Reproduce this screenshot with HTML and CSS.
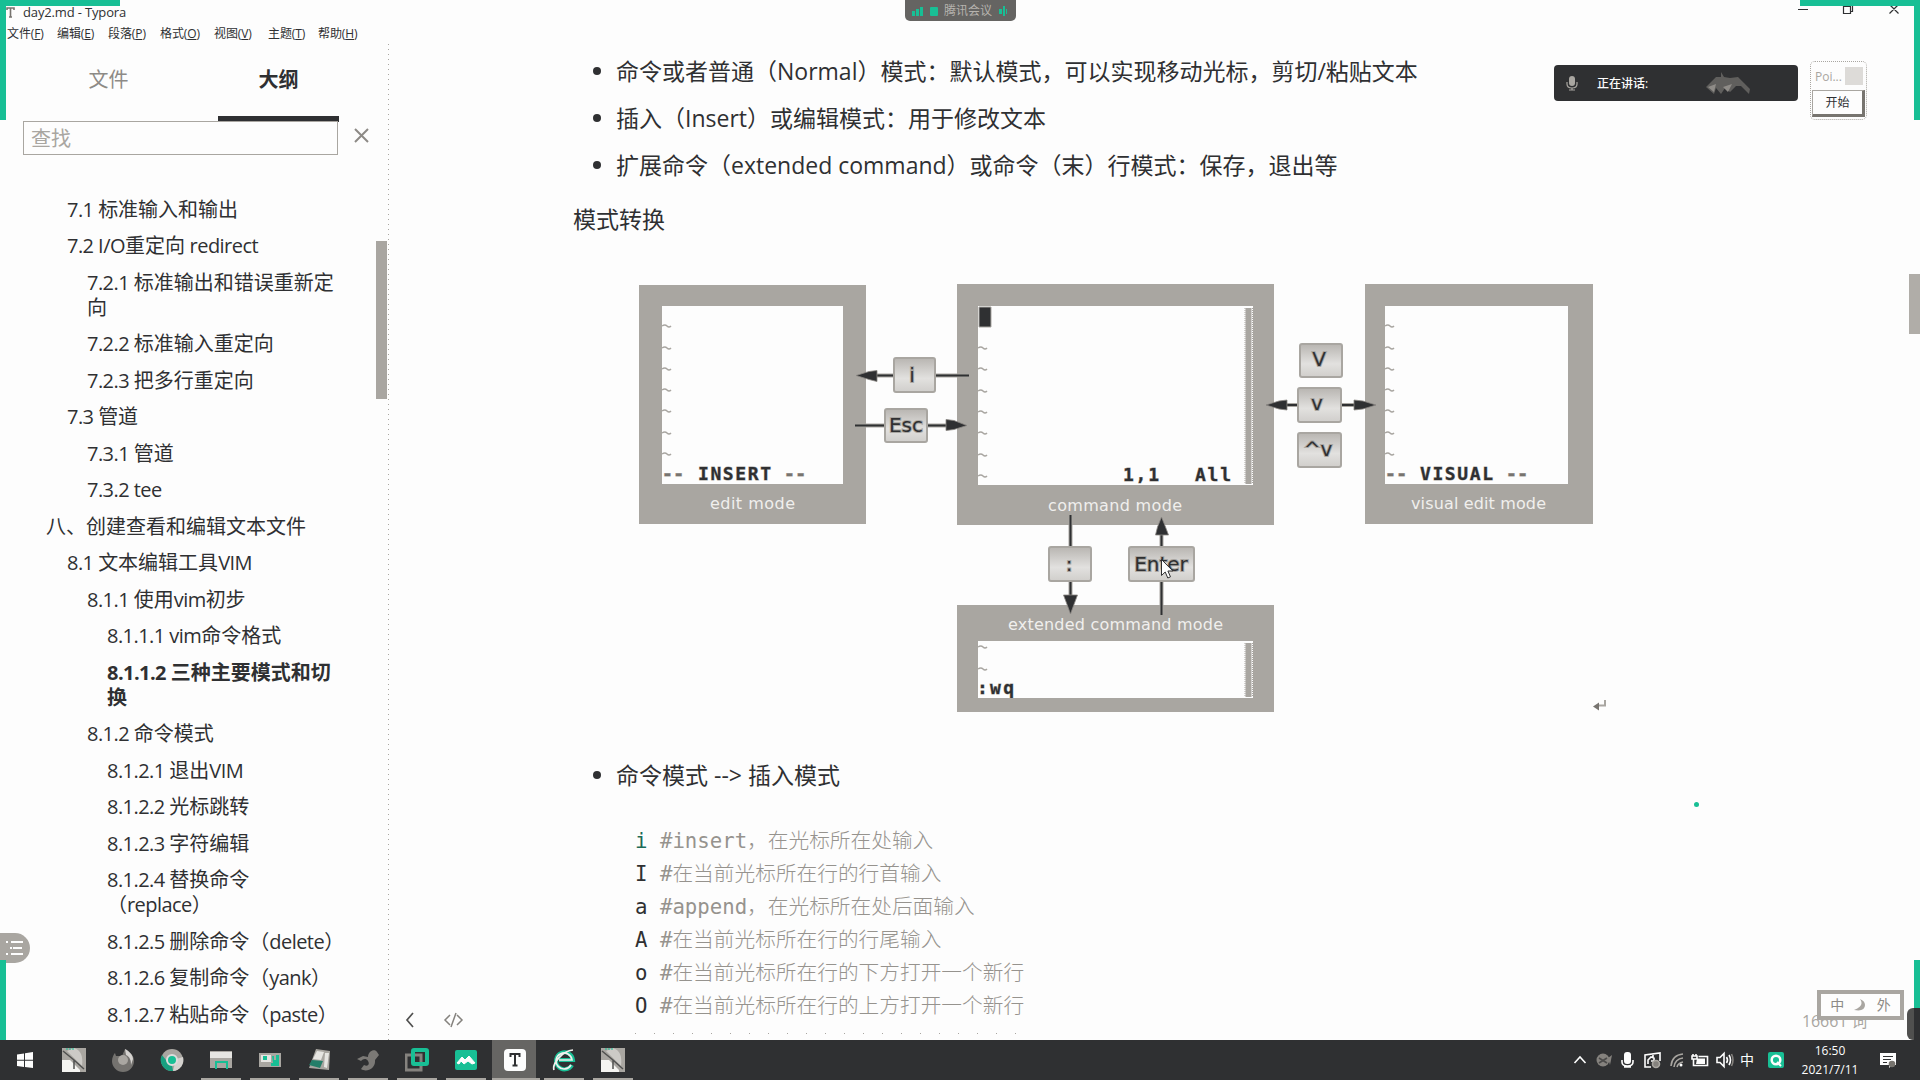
FILE: index.html
```html
<!DOCTYPE html>
<html lang="zh-CN">
<head>
<meta charset="utf-8">
<title>day2.md - Typora</title>
<link rel="stylesheet" href="styles.css">
</head>
<body>
<div class="window">
  <header class="titlebar">
    <svg class="app-mark" viewBox="0 0 9 11"><path d="M1 3V1h7v2M4.500 1v9M3 10h3" fill="none" stroke="#77746f" stroke-width="1.600"/></svg>
    <span class="title">day2.md - Typora</span>
    <svg class="win-controls" viewBox="0 0 104 14"><path d="M0 6.500h10M45.500 3.500h7v7h-7zM47.500 3V1.500h7v7H53M91.500 1.500l9 9m0-9l-9 9" fill="none" stroke="#2f3032" stroke-width="1.200"/></svg>
  </header>
  <nav class="menubar">
    <span>文件(<u>F</u>)</span><span>编辑(<u>E</u>)</span><span>段落(<u>P</u>)</span><span>格式(<u>O</u>)</span><span>视图(<u>V</u>)</span><span>主题(<u>T</u>)</span><span>帮助(<u>H</u>)</span>
  </nav>
  <div class="main">
    <aside class="sidebar">
      <div class="tabs"><span class="tab">文件</span><span class="tab active">大纲</span></div>
      <div class="search-row">
        <div class="search">查找</div>
        <svg class="close" viewBox="0 0 15 15"><path d="M1 1l13 13M14 1L1 14" stroke="#8d8a86" stroke-width="2"/></svg>
      </div>
      <ul class="outline">
        <li class="l2"><i>7.1 </i>标准输入和输出</li>
        <li class="l2"><i>7.2 I/O</i>重定向<i> redirect</i></li>
        <li class="l3"><i>7.2.1 </i>标准输出和错误重新定<br>向</li>
        <li class="l3"><i>7.2.2 </i>标准输入重定向</li>
        <li class="l3"><i>7.2.3 </i>把多行重定向</li>
        <li class="l2"><i>7.3 </i>管道</li>
        <li class="l3"><i>7.3.1 </i>管道</li>
        <li class="l3"><i>7.3.2 tee</i></li>
        <li class="l1">八、创建查看和编辑文本文件</li>
        <li class="l2"><i>8.1 </i>文本编辑工具<i>VIM</i></li>
        <li class="l3"><i>8.1.1 </i>使用<i>vim</i>初步</li>
        <li class="l4"><i>8.1.1.1 vim</i>命令格式</li>
        <li class="l4 current"><i>8.1.1.2 </i>三种主要模式和切<br>换</li>
        <li class="l3"><i>8.1.2 </i>命令模式</li>
        <li class="l4"><i>8.1.2.1 </i>退出<i>VIM</i></li>
        <li class="l4"><i>8.1.2.2 </i>光标跳转</li>
        <li class="l4"><i>8.1.2.3 </i>字符编辑</li>
        <li class="l4"><i>8.1.2.4 </i>替换命令<br>（<i>replace</i>）</li>
        <li class="l4"><i>8.1.2.5 </i>删除命令（<i>delete</i>）</li>
        <li class="l4"><i>8.1.2.6 </i>复制命令（<i>yank</i>）</li>
        <li class="l4"><i>8.1.2.7 </i>粘贴命令（<i>paste</i>）</li>
      </ul>
      <div class="side-scroll"></div>
    </aside>
    <article class="content">
      <ul class="bullets">
        <li>命令或者普通（Normal）模式：默认模式，可以实现移动光标，剪切/粘贴文本</li>
        <li>插入（Insert）或编辑模式：用于修改文本</li>
        <li>扩展命令（extended command）或命令（末）行模式：保存，退出等</li>
      </ul>
      <p class="para">模式转换</p>
      <svg class="diagram" viewBox="620 270 1000 450">
        <defs>
          <linearGradient id="key" x1="0" y1="0" x2="0" y2="1"><stop offset="0" stop-color="#b8b5b1"/><stop offset=".6" stop-color="#e2e1df"/><stop offset="1" stop-color="#d0cecb"/></linearGradient>
          <path id="tl" d="M0 0q3-2 5 0t4 0" fill="none" stroke="#a9a6a1" stroke-width="1.500"/>
        </defs>
        <g fill="#a9a6a1">
          <path d="M639 285h227v239H639zM957 284h317v241H957zM1365 284h228v240h-228zM957 605h317v107H957z"/>
        </g>
        <g fill="#fdfdfd">
          <path d="M662 306h181v178H662zM978 306h275v179H978zM1385 306h183v178h-183zM978 641h275v57H978z"/>
        </g>
        <path d="M1248.500 308v176M1248.500 643v54" stroke="#a9a6a1" stroke-width="6"/>
        <path d="M1252.500 308v176M1252.500 643v54M1245 308v176M1245 643v54" stroke="#a9a6a1" stroke-dasharray="1 1"/>
        <path d="M979 307h12v20h-12z" fill="#2f3032" stroke="#a9a6a1"/>
        <use href="#tl" x="662" y="326"/><use href="#tl" x="662" y="348"/><use href="#tl" x="662" y="369"/><use href="#tl" x="662" y="390"/><use href="#tl" x="662" y="411"/><use href="#tl" x="662" y="433"/><use href="#tl" x="662" y="454"/>
        <use href="#tl" x="978" y="348"/><use href="#tl" x="978" y="369"/><use href="#tl" x="978" y="391"/><use href="#tl" x="978" y="412"/><use href="#tl" x="978" y="433"/><use href="#tl" x="978" y="455"/><use href="#tl" x="978" y="476"/>
        <use href="#tl" x="1385" y="326"/><use href="#tl" x="1385" y="348"/><use href="#tl" x="1385" y="369"/><use href="#tl" x="1385" y="390"/><use href="#tl" x="1385" y="411"/><use href="#tl" x="1385" y="433"/><use href="#tl" x="1385" y="454"/>
        <use href="#tl" x="978" y="647"/><use href="#tl" x="978" y="669"/>
        <g class="term">
          <text x="662" y="480" textLength="22" class="dash">--</text><text x="698" y="480" textLength="73">INSERT</text><text x="784" y="480" textLength="22" class="dash">--</text>
          <text x="1123" y="481" textLength="36">1,1</text><text x="1195" y="481" textLength="36">All</text>
          <text x="1385" y="480" textLength="22" class="dash">--</text><text x="1420" y="480" textLength="73">VISUAL</text><text x="1506" y="480" textLength="22" class="dash">--</text>
          <text x="977" y="694" textLength="37">:wq</text>
        </g>
        <g class="label">
          <text x="710" y="509" textLength="85">edit mode</text>
          <text x="1048" y="511" textLength="134">command mode</text>
          <text x="1411" y="509" textLength="135">visual edit mode</text>
          <text x="1008" y="630" textLength="215">extended command mode</text>
        </g>
        <g stroke="#a9a6a1" stroke-width="4"><path d="M877 375.500h90M866 425.500h82M1285 405h72M1070.500 523v74M1161.500 533v76"/></g>
        <g stroke="#2f3032" stroke-width="2"><path d="M870 375.500h99M855 425.500h98M1280 405h84M1070.500 515v84M1161.500 530v85"/></g>
        <g fill="#2f3032" stroke="#8b8884" stroke-width=".8">
          <path d="M856 375.500l13-4 8-1v11l-8-2zM967 425.500l-13 4-8 1v-11l8 1zM1266 405l13-4 8-1v10l-8-1zM1376 405l-13 4-9 1v-10l9 1zM1070.500 614l-4-11-3-8h14l-3 8zM1161.500 517l4 10 3 8h-13l2-8z"/>
        </g>
        <g fill="url(#key)" stroke="#a9a6a1" stroke-width="2">
          <rect x="894" y="358" width="41" height="34" rx="2"/><rect x="885" y="409" width="42" height="33" rx="2"/>
          <rect x="1300" y="344" width="42" height="33" rx="2"/><rect x="1298" y="388" width="43" height="34" rx="2"/><rect x="1298" y="433" width="43" height="34" rx="2"/>
          <rect x="1049" y="547" width="42" height="34" rx="2"/><rect x="1129" y="547" width="65" height="34" rx="2"/>
        </g>
        <g class="keycap">
          <text x="912" y="382">i</text><text x="906" y="432">Esc</text><text x="1319" y="366">V</text><text x="1317" y="410">v</text><text x="1318" y="456">^v</text><text x="1069" y="571">:</text><text x="1161" y="571">Enter</text>
        </g>
        <path d="M1161.500 559.500v16l3.700-3.500 2.600 6 2.700-1.200-2.600-5.800h5z" fill="#fdfdfd" stroke="#2f3032"/>
        <path d="M1605 700v5.500h-7" fill="none" stroke="#a9a6a1" stroke-width="2"/><path d="M1593 706.500l6-4v8z" fill="#77746f"/>
      </svg>
      <ul class="bullets second"><li>命令模式 --&gt; 插入模式</li></ul>
      <pre class="code"><b class="g">i</b> <span>#insert，在光标所在处输入</span>
<b>I</b> <span>#在当前光标所在行的行首输入</span>
<b>a</b> <span>#append，在光标所在处后面输入</span>
<b>A</b> <span>#在当前光标所在行的行尾输入</span>
<b>o</b> <span>#在当前光标所在行的下方打开一个新行</span>
<b>O</b> <span>#在当前光标所在行的上方打开一个新行</span></pre>
      <div class="next-line"></div>
    </article>
  </div>
  <footer class="taskbar">
    <div class="apps">
      <div class="app"><svg viewBox="0 0 24 24"><path d="M4 6.500l7-1v6.200H4zM12 5.300l8-1.300v7.700h-8zM4 12.700h7V19l-7-1zM12 12.700h8V20l-8-1z" fill="#fdfdfd"/></svg></div>
      <div class="app"><svg viewBox="0 0 24 24"><use href="#pic"/></svg></div>
      <div class="app"><svg viewBox="0 0 24 24"><path d="M14 1l2 3c5 1 7 5 7 9a11 11 0 0 1-22 0c0-4 2-7 3-8l1 3 6 0z" fill="#74726f"/><path d="M14 1c4 2 8 6 8 10l-2 6c0-5-1-8-5-10z" fill="#d4d2cf"/><circle cx="12" cy="12" r="5" fill="#a9a6a1"/></svg></div>
      <div class="app"><svg viewBox="0 0 24 24"><circle cx="12" cy="12" r="11" fill="#a9a6a1"/><path d="M2 7a11 11 0 0 0 11 16l-1-6-6-5z" fill="#18a080"/><path d="M13 23A11 11 0 0 0 23 9l-7 2z" fill="#d4d2cf"/><circle cx="12" cy="12" r="5" fill="#18bf95" stroke="#ddd" stroke-width="2"/></svg></div>
      <div class="app run"><svg viewBox="0 0 24 24"><path d="M1 3h22v17H1z" fill="#a9a6a1"/><path d="M1 4h22v6H1z" fill="#e6e5e2"/><path d="M7 21v-7h11v7" fill="none" stroke="#18bf95" stroke-width="2"/></svg></div>
      <div class="app run"><svg viewBox="0 0 24 24"><path d="M1 5h22v14H1z" fill="#a9a6a1"/><path d="M3 7h10v7H3z" fill="#e6e5e2"/><path d="M5 8h4v4H5zM14 8h2v4h2V7h3v11h-8v-3h2z" fill="#18bf95"/></svg></div>
      <div class="app run"><svg viewBox="0 0 24 24"><path d="M9 1l14 2-1 19-20-2z" fill="#a9a6a1"/><path d="M10 3l7 1-3 8-8-1z" fill="#e6e5e2"/><path d="M5 12l11 1-3 7-11-3z" fill="#247e69"/><path d="M18 5l4 0-2 15-3-1z" fill="#e6e5e2"/></svg></div>
      <div class="app run"><svg viewBox="0 0 24 24"><path d="M1 11l6-3 5 1c0-6 7-9 9-5l2 3-4 5c1 8-8 13-14 9l3-4c4 2 6-1 4-4-2-3-5-2-7 0z" fill="#7b7976"/></svg></div>
      <div class="app run"><svg viewBox="0 0 24 24"><path d="M1 7h15v15H1z" fill="none" stroke="#85827e" stroke-width="3"/><rect x="8" y="2" width="14" height="14" rx="1" fill="none" stroke="#18bf95" stroke-width="4"/></svg></div>
      <div class="app run"><svg viewBox="0 0 24 24"><rect x="1" y="2" width="22" height="20" rx="2" fill="#18bf95"/><path d="M3 15l5-6 3 3 4-4 6 7-3 1-4-3-4 3-3-3-2 3z" fill="#fdfdfd" stroke="#fdfdfd"/></svg></div>
      <div class="app run on"><svg viewBox="0 0 24 24"><rect x="1" y="1" width="22" height="22" rx="4" fill="#fdfdfd"/><path d="M7.500 9V6h9v3M12 6v11M9.500 17.500h5" fill="none" stroke="#2f3032" stroke-width="2"/></svg></div>
      <div class="app run"><svg viewBox="0 0 24 24"><path d="M20 17a8.500 8.500 0 1 1 1-5H7" fill="none" stroke="#18bf95" stroke-width="4"/><path d="M19 17a8 8 0 1 1 1-5H7M2 22C0 16 10 3 21 2" fill="none" stroke="#f1f0ed" stroke-width="1.700"/></svg></div>
      <div class="app run"><svg viewBox="0 0 24 24"><g id="pic"><path d="M0 0h24v24H0z" fill="#a9a6a1"/><path d="M0 12l8 0 10 10v2H0z" fill="#f5f4f1"/><path d="M12 0q10 3 8 18l-7-7-8-8z" fill="#cccac6"/><path d="M1 3l11 9 10 9M12 12v9" fill="none" stroke="#50504f" stroke-width="1.500"/><path d="M4 1h8" stroke="#18bf95" stroke-dasharray="2 1"/></g></svg></div>
    </div>
    <div class="tray">
      <svg viewBox="1570 1040 220 40" width="220" height="40" fill="none" stroke="#fdfdfd" stroke-width="1.600">
        <path d="M1574.500 1063l5.500-6 5.500 6"/>
        <g stroke="none" fill="#85827e"><circle cx="1603" cy="1060" r="6.500"/><path d="M1608 1058l4-3-2 10z"/></g><path d="M1599 1058l8 5m0-5l-8 5" stroke="#4b4a49"/>
        <rect x="1624" y="1052" width="7" height="12" rx="3" fill="#fdfdfd" stroke="none"/><path d="M1622 1060v2q0 4 5.500 4t5.500-4v-2M1624 1067h7"/>
        <path d="M1651 1067h-6v-12l15-2v8M1648 1064v-4l3-3 3 1v3h-3M1653 1055v3"/><circle cx="1656" cy="1064" r="3.500" fill="#85827e" stroke="#a9a6a1"/>
        <path d="M1671 1066q1-11 12-12M1674 1067q1-8 9-9M1677 1067q1-4 6-5" stroke="#a9a6a1"/><circle cx="1681" cy="1065" r="1.500" fill="#fdfdfd" stroke="none"/>
        <path d="M1698.500 1056.500h9v9h-14v-6M1692 1056h5v3h-5zM1693 1056v-2M1696 1056v-2"/><path d="M1697 1058.500h8v5.500h-9z" fill="#fdfdfd" stroke="none"/>
        <path d="M1717 1057.500h3l4-4v13l-4-4h-3zM1726.500 1057q2 3 0 6M1729 1055q3 5 0 10"/><path d="M1731.500 1054q3 6 0 12" stroke="#85827e"/>
        <rect x="1768" y="1052" width="16" height="16" rx="2" fill="#18bf95" stroke="none"/><circle cx="1776" cy="1060" r="4.300" stroke-width="2.500"/><path d="M1777 1062l4 4" stroke-width="2"/>
        <text x="1747" y="1065" text-anchor="middle" class="tray-cn">中</text>
      </svg>
      <div class="clock"><span>16:50</span><span>2021/7/11</span></div>
      <svg class="note" viewBox="0 0 18 18"><path d="M1 2h16v12h-4l-3 3v-3H1z" fill="#fdfdfd"/><path d="M4 5.500h10M4 8.500h8M4 11.500h4" stroke="#2f3032"/><circle cx="13" cy="13" r="3.300" fill="#77746f"/></svg>
    </div>
  </footer>
</div>

<div class="edge tl-h"></div><div class="edge tl-v"></div><div class="edge tr-h"></div><div class="edge tr-v"></div><div class="edge bl-v"></div><div class="edge br-v"></div>
<div class="bump"></div>
<div class="meeting-pill">
  <svg viewBox="0 0 26 12"><path d="M0 11V6h3v5zM4 11V4h3v7zM8 11V2h3v9z" fill="#18bf95"/><rect x="18" y="2" width="8" height="9" rx="1" fill="#18bf95"/></svg>
  <span>腾讯会议</span>
  <svg class="sig" viewBox="0 0 10 12"><path d="M1 4h3v5H1zM5 1h2v10H5zM8 4h1v5H8z" fill="#18bf95"/></svg>
</div>
<div class="speaking">
  <svg class="mic" viewBox="0 0 12 16"><rect x="3" y="1" width="6" height="10" rx="3" fill="#a9a6a1"/><path d="M1 7v2q0 4 5 4t5-4V7M6 13v2M3 15h6" fill="none" stroke="#a9a6a1" stroke-width="1.200"/></svg>
  <span>正在讲话:</span>
  <svg class="wave" viewBox="0 0 44 23"><path d="M0 15L10 5l5 0 0-5 3 5 6 1 8-1 6 6 6 6-1 5-8-8-5 0-6 6-5-4-4 6-5-6-2 6z" fill="#605f5d"/><path d="M2 15l6 5 2-8zM17 15l5 5 4-8z" fill="#8f8c88"/></svg>
</div>
<div class="pointer-tool">
  <div class="pt-head"><span>Poi...</span><div class="pt-box"></div></div>
  <div class="pt-btn">开始</div>
</div>
<div class="page-scroll"></div>
<div class="outline-toggle"><svg viewBox="0 0 18 14"><path d="M0 1h2M0 13h2M4 7h2M5 1h12M7 7h9M5 13h12" stroke="#fdfdfd" stroke-width="2"/></svg></div>
<svg class="status-icons" viewBox="0 0 60 16"><path d="M8 1L2 8l6 7" fill="none" stroke="#50504f" stroke-width="1.700"/><path d="M45 3l-5 5 5 5M52 3l5 5-5 5M51 1l-5 14" fill="none" stroke="#85827e" stroke-width="1.500"/></svg>
<div class="green-dot"></div>
<div class="word-count">16661 词</div>
<div class="ime"><span>中</span><svg viewBox="0 0 12 12"><path d="M6 0q5 7-6 11 11 2 11-5Q11 2 6 0z" fill="#a9a6a1"/></svg><span>外</span></div>
</body>
</html>
```

FILE: styles.css
```css
* { box-sizing: border-box; }
body {
  margin: 0; width: 1920px; height: 1080px; overflow: hidden; position: relative;
  background: #fdfdfd; color: #2f3032;
  font-family: "Open Sans", "Noto Sans CJK SC", sans-serif;
  text-spacing-trim: space-all;
}
ul, p, pre { margin: 0; padding: 0; list-style: none; }
i { font-style: normal; }
.window { display: flex; flex-direction: column; height: 1080px; }

.titlebar { display: flex; align-items: center; height: 24px; padding-left: 6px; }
.app-mark { width: 9px; height: 11px; margin-right: 8px; }
.title { font-size: 13px; line-height: 24px; letter-spacing: -.15px; }
.win-controls { width: 104px; height: 14px; margin: 0 18px 4px auto; }
.menubar { display: grid; grid-template-columns: 50px 51px 52px 54px 54px 50px 60px; height: 20px; padding-left: 7px; font-size: 12px; line-height: 20px; white-space: nowrap; letter-spacing: -.1px; }

.main { flex: 1; min-height: 0; display: flex; overflow: hidden; }
.sidebar { width: 389px; position: relative; background: repeating-linear-gradient(#a9a6a1 0 1px, transparent 1px 5px) right top / 1px 100% no-repeat; }
.tabs { display: grid; grid-template-columns: 121px 121px; height: 64px; padding-left: 48px; column-gap: 49px; font-size: 20px; }
.tab { line-height: 72px; text-align: center; color: #8d8a86; }
.tab.active { font-weight: 700; color: #2f3032; border-bottom: 6px solid #2f3032; }
.search-row { display: flex; gap: 16px; padding: 13px 0 0 23px; }
.search { width: 315px; height: 34px; border: 1px solid #a9a6a1; padding-left: 7px; font-size: 20px; line-height: 34px; color: #a9a6a1; }
.close { width: 15px; height: 15px; margin-top: 7px; }
.outline { padding-top: 36px; font-size: 20px; line-height: 25px; white-space: nowrap; }
.outline li { padding: 5.750px 0; }
.outline i { letter-spacing: -.55px; }
.l1 { margin-left: 46px; } .l2 { margin-left: 67px; } .l3 { margin-left: 87px; } .l4 { margin-left: 107px; }
.current { font-weight: 700; }
.side-scroll { position: absolute; left: 376px; top: 197px; width: 11px; height: 158px; background: #a9a6a1; }

.content { flex: 1; padding: 4px 0 0 184px; }
.bullets { padding-left: 43px; font-size: 23px; line-height: 33px; white-space: nowrap; }
.bullets li { position: relative; height: 47px; padding-top: 7px; }
.bullets li::before { content: ""; position: absolute; left: -23px; top: 19px; width: 8px; height: 8px; border-radius: 50%; background: #2f3032; }
.para { font-size: 23px; line-height: 33px; padding-top: 14px; }
.diagram { display: block; width: 1000px; height: 450px; margin: 34px 0 0 47px; }
.term text { font: bold 18px "DejaVu Sans Mono", monospace; fill: #2f3032; stroke: #a9a6a1; stroke-width: .8px; paint-order: stroke; }
.term .dash { fill: #77746f; }
.label text { font: 16px "DejaVu Sans", sans-serif; fill: #f0efed; }
.keycap text { font: 20px "DejaVu Sans", sans-serif; text-anchor: middle; fill: #2f3032; stroke: #a9a6a1; stroke-width: 2px; paint-order: stroke; }
.bullets.second { margin-top: 32px; }
.code { margin: 26px 0 0 62px; font: 20.700px/33px "DejaVu Sans Mono", "Noto Sans CJK SC", monospace; }
.code b { font-weight: 400; }
.code .g { color: #1d6b58; }
.code span { color: #96938e; font-weight: 300; }
.next-line { width: 396px; height: 1px; margin: 10px 0 0 62px; background: repeating-linear-gradient(90deg, #a9a6a1 0 1px, transparent 1px 19px); }

.taskbar { height: 40px; display: flex; justify-content: space-between; background: #2f3032; color: #fdfdfd; }
.apps { display: flex; }
.app { width: 49px; height: 40px; display: flex; align-items: center; justify-content: center; position: relative; }
.app svg { width: 24px; height: 24px; }
.app.run::after { content: ""; position: absolute; left: 5px; bottom: 0; width: 40px; height: 2px; background: #a9a6a1; }
.app.on { background: linear-gradient(#666563, #666563) 2px 0 / 44px 38px no-repeat; }
.app.on::after { left: 2px; width: 48px; }
.tray { display: flex; align-items: center; padding-right: 23px; }
.tray-cn { font: 14px "Noto Sans CJK SC", sans-serif; fill: #fdfdfd; stroke: none; }
.clock { width: 80px; margin-right: 9px; display: flex; flex-direction: column; align-items: center; font-size: 12px; line-height: 19px; }
.note { width: 18px; height: 18px; }

.edge { position: absolute; background: #18bf95; }
.tl-h { left: 0; top: 0; width: 120px; height: 6px; }
.tl-v { left: 0; top: 0; width: 6px; height: 120px; }
.tr-h { right: 0; top: 0; width: 120px; height: 6px; }
.tr-v { right: 0; top: 0; width: 6px; height: 120px; }
.bl-v { left: 0; top: 960px; width: 6px; height: 80px; }
.br-v { right: 0; top: 960px; width: 6px; height: 49px; }
.bump { position: absolute; right: 0; top: 1008px; width: 13px; height: 32px; border-radius: 6px 0 0 6px; background: linear-gradient(90deg, #50504f 7px, #2f3032 7px); }
.meeting-pill { position: absolute; left: 905px; top: 0; width: 111px; height: 21px; border-radius: 0 0 5px 5px; background: #656462; display: flex; align-items: center; gap: 6px; padding-left: 7px; font-size: 12px; line-height: 18px; color: #b6b3ae; }
.meeting-pill svg { width: 26px; height: 12px; }
.meeting-pill .sig { width: 10px; }
.speaking { position: absolute; left: 1554px; top: 65px; width: 244px; height: 36px; border-radius: 4px; background: #2f3032; color: #fdfdfd; display: flex; align-items: center; padding-left: 12px; font-size: 12px; font-weight: 500; }
.mic { width: 12px; height: 16px; margin-right: 19px; }
.wave { width: 44px; height: 23px; margin-left: 58px; }
.pointer-tool { position: absolute; left: 1810px; top: 61px; width: 57px; height: 59px; border: 1px dotted #a9a6a1; border-radius: 5px; padding-left: 1px; }
.pt-head { display: flex; align-items: center; height: 28px; gap: 3px; padding-left: 3px; font-size: 12px; color: #a9a6a1; }
.pt-box { width: 18px; height: 18px; background: #dddbd8; }
.pt-btn { width: 53px; height: 27px; border: 1px solid #a9a6a1; border-right: 3px solid #77746f; border-bottom: 3px solid #77746f; font-size: 12px; line-height: 24px; text-align: center; }
.page-scroll { position: absolute; left: 1909px; top: 274px; width: 11px; height: 60px; background: #b0ada8; }
.outline-toggle { position: absolute; left: 0; top: 933px; width: 30px; height: 30px; border-radius: 0 15px 15px 0; background: #a9a6a1; clip-path: polygon(0 0, 100% 0, 100% 100%, 6px 100%, 6px 27px, 0 27px); }
.outline-toggle svg { display: block; width: 18px; height: 14px; margin: 8px 0 0 6px; }
.status-icons { position: absolute; left: 405px; top: 1012px; width: 60px; height: 16px; }
.green-dot { position: absolute; left: 1694px; top: 802px; width: 5px; height: 5px; border-radius: 50%; background: #18bf95; }
.word-count { position: absolute; left: 1802px; top: 1009px; font-size: 16px; line-height: 24px; color: #a9a6a1; letter-spacing: -.1px; }
.ime { position: absolute; left: 1817px; top: 990px; width: 87px; height: 30px; border: 4px solid #a9a6a1; background: #fdfdfd; display: flex; align-items: center; justify-content: space-around; padding: 0 4px; font-size: 14px; line-height: 20px; color: #8d8a86; }
.ime svg { width: 12px; height: 12px; }
```
